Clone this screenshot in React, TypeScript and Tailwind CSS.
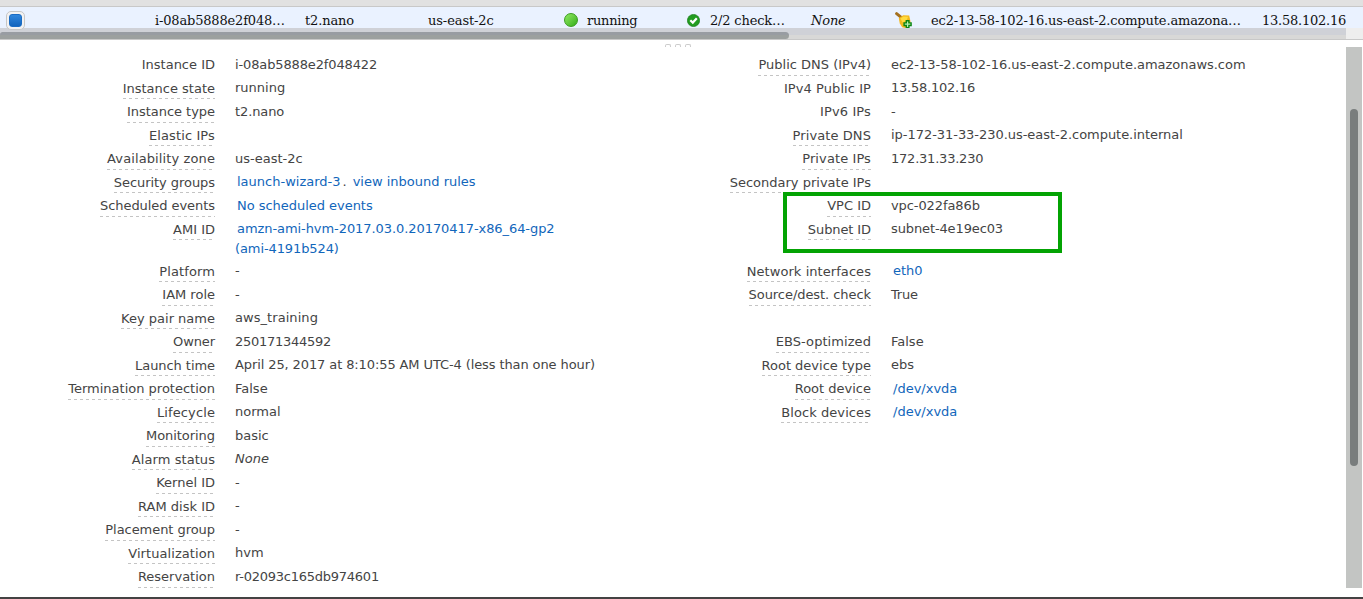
import React from "react";

type Row = {
  l?: string;
  v?: React.ReactNode;
  lt?: string;
  vt?: string;
  plain?: boolean;
  tall?: boolean;
  link?: boolean;
};

const left: Row[] = [
  { l: "Instance ID", v: "i-08ab5888e2f048422", vt: "tracking-[-0.13px]", plain: true },
  { l: "Instance state", v: "running" },
  { l: "Instance type", v: "t2.nano", vt: "tracking-[-0.1px]", lt: "tracking-[-0.04px]" },
  { l: "Elastic IPs", lt: "tracking-[0.12px]" },
  { l: "Availability zone", v: "us-east-2c", lt: "tracking-[0.11px]" },
  {
    l: "Security groups",
    lt: "tracking-[-0.06px]",
    v: (
      <>
        <a className="ml-[2px] text-[#1166bb]">launch-wizard-3</a>
        <span className="ml-[2px]">.</span>
        <a className="ml-[6px] text-[#1166bb]">view inbound rules</a>
      </>
    ),
  },
  { l: "Scheduled events", lt: "tracking-[-0.06px]", v: "No scheduled events", vt: "tracking-[-0.03px]", link: true },
  {
    l: "AMI ID",
    v: (
      <a className="text-[#1166bb]">
        <span className="ml-[2px] tracking-[-0.07px]">amzn-ami-hvm-2017.03.0.20170417-x86_64-gp2</span>
        <br />
        <span className="tracking-[-0.1px]">(ami-4191b524)</span>
      </a>
    ),
    tall: true,
  },
  { l: "Platform", v: "-", lt: "tracking-[0.12px]" },
  { l: "IAM role", v: "-" },
  { l: "Key pair name", v: "aws_training", vt: "tracking-[0.06px]" },
  { l: "Owner", v: "250171344592", lt: "tracking-[-0.1px]", vt: "tracking-[-0.27px]" },
  {
    l: "Launch time",
    lt: "tracking-[-0.06px]",
    v: "April 25, 2017 at 8:10:55 AM UTC-4 (less than one hour)",
    vt: "tracking-[-0.105px]",
  },
  { l: "Termination protection", v: "False" },
  { l: "Lifecycle", v: "normal", lt: "tracking-[0.12px]" },
  { l: "Monitoring", v: "basic", lt: "tracking-[-0.05px]" },
  { l: "Alarm status", v: <i>None</i>, lt: "tracking-[0.07px]" },
  { l: "Kernel ID", v: "-" },
  { l: "RAM disk ID", v: "-" },
  { l: "Placement group", v: "-", lt: "tracking-[-0.05px]" },
  { l: "Virtualization", v: "hvm", lt: "tracking-[0.07px]" },
  { l: "Reservation", v: "r-02093c165db974601", vt: "tracking-[-0.25px]" },
];

const right: Row[] = [
  { l: "Public DNS (IPv4)", v: "ec2-13-58-102-16.us-east-2.compute.amazonaws.com", vt: "tracking-[-0.025px]" },
  { l: "IPv4 Public IP", lt: "tracking-[0.07px]", v: "13.58.102.16", vt: "tracking-[-0.24px]", plain: true },
  { l: "IPv6 IPs", v: "-", lt: "tracking-[0.12px]", plain: true },
  { l: "Private DNS", lt: "tracking-[0.09px]", v: "ip-172-31-33-230.us-east-2.compute.internal", vt: "tracking-[-0.04px]" },
  { l: "Private IPs", lt: "tracking-[0.1px]", v: "172.31.33.230", vt: "tracking-[-0.22px]" },
  { l: "Secondary private IPs" },
  { l: "VPC ID", v: "vpc-022fa86b", vt: "tracking-[-0.09px]" },
  { l: "Subnet ID", lt: "tracking-[-0.1px]", v: "subnet-4e19ec03", vt: "tracking-[-0.12px]", tall: true },
  { l: "Network interfaces", lt: "tracking-[0.06px]", v: "eth0", link: true },
  { l: "Source/dest. check", lt: "tracking-[-0.06px]", v: "True", vt: "tracking-[-0.2px]" },
  {},
  { l: "EBS-optimized", v: "False", lt: "tracking-[0.07px]" },
  { l: "Root device type", v: "ebs" },
  { l: "Root device", v: "/dev/xvda", link: true },
  { l: "Block devices", v: "/dev/xvda", lt: "tracking-[0.08px]", link: true },
];

function Details({ rows }: { rows: Row[] }) {
  return (
    <div className="flex flex-col">
      {rows.map((r, i) => (
        <div key={i} className={`flex shrink-0 items-start ${r.tall ? "h-[42px]" : "h-[23.5px]"}`}>
          <div className="flex w-[215px] shrink-0 justify-end pt-[0.25px]">
            {r.l && (
              <span className={`relative block h-[21px] whitespace-nowrap leading-[20px] ${r.lt ?? ""}`}>
                {r.l}
                {!r.plain && (
                  <svg className="absolute top-[19.6px] left-0 h-px w-full" shapeRendering="crispEdges">
                    <line x1="0" x2="100%" y1="0.5" y2="0.5" stroke="#c4c4c4" strokeDasharray="3 3" />
                  </svg>
                )}
              </span>
            )}
          </div>
          <div className={`-mt-[0.25px] ml-5 whitespace-nowrap leading-[20px] ${r.vt ?? ""}`}>
            {r.link ? <a className="ml-[2px] text-[#1166bb]">{r.v}</a> : r.v}
          </div>
        </div>
      ))}
    </div>
  );
}

function BellPlus() {
  return (
    <svg className="h-[16px] w-[18px]" viewBox="0 0 18 16">
      <path d="M1.6 1.6 5.6 4.8" stroke="#a4701f" strokeWidth="3" strokeLinecap="round" />
      <path d="M3.8 6.2 8.2 3.2 14.2 3.6 15.6 10 10.4 16 7.2 15.2 4.8 11.5Z" fill="#f3b81c" />
      <path d="M5.4 6.6 8.6 4.4 13 4.8 11.6 8.4 7.6 10.4Z" fill="#ffdb3f" />
      <path d="M11.3 8.7h2.6v2.2h2.2v2.6h-2.2v2.2h-2.6v-2.2H9.1v-2.6h2.2Z" fill="#b4f0ae" stroke="#0a8512" strokeWidth="1.4" />
    </svg>
  );
}

export default function App() {
  return (
    <div className="flex h-[599px] w-[1363px] flex-col overflow-hidden bg-white font-['DejaVu_Sans',sans-serif] text-[13px] text-[#444444]">
      <div className="h-[7px] shrink-0 border-b border-[#c8c8c8] bg-[#e1e1e1]" />
      <div className="flex h-[21px] shrink-0 items-start overflow-visible whitespace-nowrap bg-[#eaf2ff] font-['DejaVu_Serif',serif] leading-[28px] text-[#111111]">
        <div className="w-[155px] shrink-0 pl-[6px] pt-[4px]">
          <div className="relative flex size-[19px] items-center justify-center rounded-[5px] border border-[#c6c6c6] bg-[#f2f2f2]">
            <div className="size-[13px] rounded-[3px] border border-[#1a6cc4] bg-linear-to-b from-[#2f86dc] to-[#1265bd]" />
          </div>
        </div>
        <div className="w-[150px] shrink-0 tracking-[-0.17px]">i-08ab5888e2f048…</div>
        <div className="w-[123px] shrink-0 tracking-[-0.14px]">t2.nano</div>
        <div className="w-[136px] shrink-0 tracking-[-0.1px]">us-east-2c</div>
        <div className="flex w-[123px] shrink-0">
          <div className="mt-[6px] size-[14px] rounded-full border border-[#3a9c1e] bg-linear-to-br from-[#8fea62] to-[#2fae12]" />
          <span className="ml-[9px] tracking-[-0.25px]">running</span>
        </div>
        <div className="flex w-[124px] shrink-0">
          <svg className="mt-[7px] size-[13px] shrink-0" viewBox="0 0 13 13">
            <circle cx="6.5" cy="6.5" r="6.1" fill="#229c20" stroke="#157a16" strokeWidth="0.7" />
            <path d="M3.3 6.2 5.8 8.6 9.8 4.2" fill="none" stroke="#fff" strokeWidth="2.2" />
          </svg>
          <span className="ml-[10px] tracking-[-0.17px]">2/2 check…</span>
        </div>
        <div className="w-[84px] shrink-0 tracking-[-0.15px] italic">None</div>
        <div className="w-[36px] shrink-0 pt-[5px]">
          <BellPlus />
        </div>
        <div className="w-[331px] shrink-0 tracking-[-0.135px]">ec2-13-58-102-16.us-east-2.compute.amazona…</div>
        <div className="tracking-[-0.24px]">13.58.102.16</div>
      </div>
      <div className="flex h-[12px] shrink-0 border-b border-[#c8c8c8] bg-[#eeeeee]">
        <div className="h-[11px] w-[1346px] bg-linear-to-b from-[#cfd1d7] from-60% to-[#d8d8d7] to-60% pt-[4px]">
          <div className="h-[7px] w-[789px] rounded-r-[4px] rounded-tl-[3px] bg-linear-to-b from-[#989ca2] from-40% to-[#9ca09f] to-40%" />
        </div>
      </div>
      <div className="flex h-[7px] shrink-0 gap-[4px] pl-[665px] pt-[4px]">
        {[0, 1, 2].map((i) => (
          <div key={i} className="h-[3px] w-[6px] rounded-t-[2px] border border-b-0 border-[#cccccc]" />
        ))}
      </div>
      <div className="flex h-[541px] shrink-0">
        <div className="relative flex w-[1346px] shrink-0 pt-[8px]">
          <div className="w-[656px] shrink-0">
            <Details rows={left} />
          </div>
          <Details rows={right} />
          <div className="absolute top-[145px] left-[783px] h-[61px] w-[279px] border-4 border-[#03a303]" />
        </div>
        <div className="w-[16px] bg-[#c3c5c3] pl-[4px] pt-[62px]">
          <div className="h-[357px] w-[8px] rounded-full bg-[#797d7d]" />
        </div>
      </div>
      <div className="h-[9px] shrink-0" />
      <div className="h-[2px] shrink-0 bg-[#444243]" />
    </div>
  );
}
